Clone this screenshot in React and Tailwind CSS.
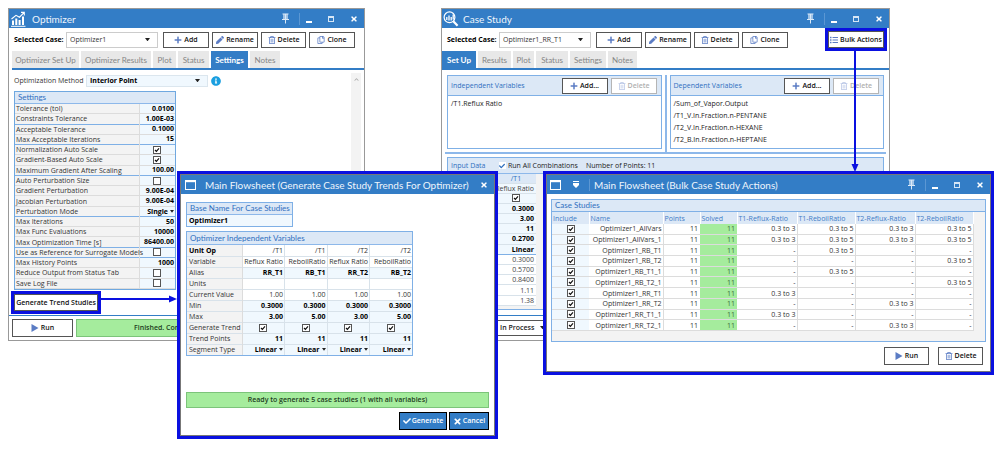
import React from "react";
import { FaPlus, FaPen, FaRegTrashAlt, FaRegCopy, FaList, FaInfoCircle, FaCheck, FaTimes, FaChevronUp } from "react-icons/fa";

function Caret({ className = "" }) {
  return (
    <svg viewBox="0 0 6 4" aria-hidden="true" className={`pointer-events-none ${className}`}>
      <path d="M0 0H6L3 4Z" fill="#222" />
    </svg>
  );
}

function PlayIcon({ className = "" }) {
  return (
    <svg viewBox="0 0 7 8" aria-hidden="true" className={className}>
      <path d="M0 0L7 4L0 8Z" fill="currentColor" />
    </svg>
  );
}

function PinIcon() {
  return (
    <svg viewBox="0 0 9 11" aria-hidden="true" className="h-[11px] w-[9px]" fill="none" stroke="#dbe9f7">
      <path d="M1.5 1H7.5M1 6.5H8" strokeWidth="1.2" />
      <path d="M3 1V6.5M6 1V6.5" strokeWidth="1.3" />
      <path d="M4.5 1V10.5" strokeWidth="1" />
    </svg>
  );
}

function Tick({ label, defaultChecked = false }) {
  return (
    <label className="inline-grid place-items-center align-middle">
      <input
        type="checkbox"
        aria-label={label}
        defaultChecked={defaultChecked}
        className="peer col-start-1 row-start-1 size-2 appearance-none border border-[#555] bg-white"
      />
      <svg viewBox="0 0 8 8" aria-hidden="true" className="pointer-events-none invisible col-start-1 row-start-1 size-2 peer-checked:visible">
        <path d="M2 4L3.4 5.4L6 2.4" fill="none" stroke="#111" strokeWidth="1.2" />
      </svg>
    </label>
  );
}

function Select({ label, value, className = "", selectClass = "", caret = "right-2 w-[5px]" }) {
  return (
    <span className={`relative flex items-center ${className}`}>
      <select aria-label={label} className={`w-full appearance-none outline-none ${selectClass}`} defaultValue={value}>
        <option>{value}</option>
      </select>
      <Caret className={`absolute ${caret}`} />
    </span>
  );
}

function Btn({ icon: Icon, children, className = "", disabled = false, tone = "text-[#5b7cc4]" }) {
  return (
    <button
      type="button"
      disabled={disabled}
      className={`flex items-center justify-center gap-[2px] border bg-white text-[7px] leading-[10px] font-semibold whitespace-nowrap ${
        disabled ? "border-[#b5b5b5] text-[#b0b0b0]" : "border-[#555] text-[#111]"
      } ${className}`}
    >
      {Icon && <Icon className={`size-2 shrink-0 ${disabled ? "text-[#b9c6e6]" : tone}`} />}
      {children}
    </button>
  );
}

function WindowButtons() {
  return (
    <div className="flex h-full items-center">
      <button type="button" aria-label="Pin" className="pr-[9px]"><PinIcon /></button>
      <span className="h-3 w-px bg-[#5b97d3]" />
      <button type="button" aria-label="Minimize" className="ml-[6px] h-2 w-[6px] border-b-2 border-white" />
      <button type="button" aria-label="Maximize" className="ml-4 h-[6px] w-[6px] border border-t-2 border-[#d6e6f6]" />
      <button type="button" aria-label="Close" className="ml-4 mr-[6px]"><FaTimes className="size-2" /></button>
    </div>
  );
}

function WindowIcon() {
  return (
    <svg viewBox="0 0 11 10" aria-hidden="true" className="h-[10px] w-[11px]">
      <rect x=".5" y=".5" width="10" height="9" fill="none" stroke="#fff" />
      <path d="M0 1.2H11" stroke="#fff" strokeWidth="2" />
    </svg>
  );
}

function ChartIcon() {
  return (
    <svg viewBox="0 0 16 16" aria-hidden="true" className="size-4" stroke="#fff" fill="none">
      <path d="M1 15.3H15.5" strokeWidth="1" />
      <path d="M3 14V9.5M6.3 14V7.5M9.6 14V9M13 14V5.5" strokeWidth="2" />
      <path d="M1.5 8L6 4.3L9.5 6.2L14 1.6M11 1.4H14.3V4.6" strokeWidth="1.1" />
    </svg>
  );
}

function StudyIcon() {
  return (
    <svg viewBox="0 0 16 16" aria-hidden="true" className="size-4" stroke="#fff" fill="none">
      <circle cx="6.5" cy="6.3" r="5.4" strokeWidth="1.2" />
      <path d="M10.3 10.3L14.6 14.8" strokeWidth="2.2" />
      <path d="M3.8 9V6M6 9.6V4.5M8.2 9.6V6M10.2 8.5V3.5" strokeWidth="1.3" />
    </svg>
  );
}

function TitleBar({ icon, title, children }) {
  return (
    <header className="flex h-[19px] shrink-0 items-center justify-between bg-[#337dc6] text-white">
      <div className="flex items-center">
        {icon}
        <h2 className="font-['Lato',sans-serif] text-[10px] leading-4 whitespace-nowrap text-[#eef5fc]">{title}</h2>
      </div>
      {children}
    </header>
  );
}

function CaseToolbar({ value, children }) {
  return (
    <div className="flex h-[23px] items-center justify-between px-[5px]">
      <div className="flex items-center gap-[3px]">
        <span className="w-[49px] font-bold whitespace-nowrap text-black">Selected Case:</span>
        <Select label="Selected Case" value={value} className="mr-[2px] w-[92px]" selectClass="h-4 border border-[#ccc] bg-white pl-[3px] text-[#333]" />
        <Btn icon={FaPlus} className="h-4 w-[46px]">Add</Btn>
        <Btn icon={FaPen} className="h-4 w-[46px]">Rename</Btn>
        <Btn icon={FaRegTrashAlt} className="h-4 w-[45px]">Delete</Btn>
        <Btn icon={FaRegCopy} className="h-4 w-[46px]">Clone</Btn>
      </div>
      {children}
    </div>
  );
}

function Tabs({ items, active }) {
  return (
    <div role="tablist" className="flex h-[19px] items-end gap-[2px] border-b-2 border-[#337dc6] bg-white">
      {items.map(([name, width]) => (
        <button
          key={name}
          type="button"
          role="tab"
          aria-selected={name === active}
          className={`h-[17px] font-['Lato',sans-serif] text-[8px] leading-[10px] whitespace-nowrap ${width} ${
            name === active ? "bg-[#337dc6] font-bold text-white" : "bg-[#e8e8e8] text-[#858585]"
          }`}
        >
          {name}
        </button>
      ))}
    </div>
  );
}

const settings = [
  ["Tolerance (tol)", "0.0100"],
  ["Constraints Tolerance", "1.00E-03", true],
  ["Acceptable Tolerance", "0.1000"],
  ["Max Acceptable Iterations", "15", true],
  ["Normalization Auto Scale", true],
  ["Gradient-Based Auto Scale", true],
  ["Maximum Gradient After Scaling", "100.00", true],
  ["Auto Perturbation Size", false],
  ["Gradient Perturbation", "9.00E-04"],
  ["Jacobian Perturbation", "9.00E-04"],
  ["Perturbation Mode", "Single", true],
  ["Max Iterations", "50"],
  ["Max Func Evaluations", "10000"],
  ["Max Optimization Time [s]", "86400.00", true],
  ["Use as Reference for Surrogate Models", false, true],
  ["Max History Points", "1000"],
  ["Reduce Output from Status Tab", false],
  ["Save Log File", false],
];

function CellSelect({ label, value }) {
  return (
    <Select
      label={label}
      value={value}
      selectClass="h-[9px] pr-[6px] leading-[9px] font-bold text-black [text-align-last:right]"
      caret="right-0 w-1"
    />
  );
}

function SettingsTable() {
  return (
    <section className="w-[162px] border border-[#6fa8e0]">
      <h3 className="h-[12px] border-b border-[#8db8ea] bg-[#dce8f6] pl-[3px] font-['Lato',sans-serif] text-[8px] leading-[11px] text-[#2f6fbf]">Settings</h3>
      <table className="h-[185px] w-full table-fixed border-collapse leading-[9px]">
        <tbody>
          {settings.map(([name, value, last]) => (
            <tr key={name} className={`border-b ${last ? "border-[#7fb0e6]" : "border-[#dcdcdc]"}`}>
              <th scope="row" className="w-[124px] border-r border-r-[#dcdcdc] bg-[#f3f3f3] py-0 pl-[1px] text-left font-normal whitespace-nowrap text-[#333]">{name}</th>
              <td className={`bg-[#f0f8fe] px-[1px] py-0 leading-[8px] font-bold text-black ${typeof value === "boolean" ? "text-center" : "text-right"}`}>
                {typeof value === "boolean" ? (
                  <Tick label={name} defaultChecked={value} />
                ) : value === "Single" ? (
                  <CellSelect label={name} value={value} />
                ) : (
                  value
                )}
              </td>
            </tr>
          ))}
        </tbody>
      </table>
    </section>
  );
}

function OptimizerWindow() {
  return (
    <section className="absolute top-2 left-2 flex h-[333px] w-[357px] flex-col border border-[#999] bg-white">
      <TitleBar title="Optimizer" icon={<span className="mr-[6px] ml-px"><ChartIcon /></span>}>
        <WindowButtons />
      </TitleBar>
      <CaseToolbar value="Optimizer1" />
      <div className="pl-[3px]">
        <Tabs
          active="Settings"
          items={[["Optimizer Set Up", "w-[67px]"], ["Optimizer Results", "w-[70px]"], ["Plot", "w-[23px]"], ["Status", "w-[31px]"], ["Settings", "w-[37px]"], ["Notes", "w-[30px]"]]}
        />
      </div>
      <div className="flex grow justify-between pl-[5px]">
        <div>
          <div className="flex h-[21px] items-center gap-[3px]">
            <span className="w-[69px] whitespace-nowrap text-[#333]">Optimization Method</span>
            <Select label="Optimization Method" value="Interior Point" className="w-[122px]" selectClass="h-3 border border-[#dbe6ee] bg-[#f0f8fe] pl-[3px] font-bold text-black" />
            <FaInfoCircle className="size-[10px] text-[#1a9fe0]" />
          </div>
          <SettingsTable />
          <Btn className="mt-1 h-[17px] w-[84px] outline-3 outline-[#0a10e0]">Generate Trend Studies</Btn>
        </div>
        <div className="mt-[3px] mr-[3px] flex w-[10px] justify-center bg-[#f3f3f3] pt-1">
          <FaChevronUp className="size-[5px] text-[#aaa]" />
        </div>
      </div>
      <footer className="flex h-[25px] items-center gap-[3px] border-t border-[#337dc6] px-[3px]">
        <Btn icon={PlayIcon} className="h-[18px] w-[61px] gap-1">Run</Btn>
        <output className="flex h-[18px] grow items-center border border-[#7cc47a] bg-[#a5ec9d] pl-[57px] font-semibold whitespace-nowrap text-[#1c3c1c]">
          Finished. Conv
        </output>
      </footer>
    </section>
  );
}

const trendRows = [
  ["Unit Op", ["/T1", "/T1", "/T2", "/T2"], "plain"],
  ["Variable", ["Reflux Ratio", "ReboilRatio", "Reflux Ratio", "ReboilRatio"], "plain"],
  ["Alias", ["RR_T1", "RB_T1", "RR_T2", "RB_T2"], "input"],
  ["Units", ["", "", "", ""], "plain"],
  ["Current Value", ["1.00", "1.00", "1.00", "1.00"], "plain"],
  ["Min", ["0.3000", "0.3000", "0.3000", "0.3000"], "input"],
  ["Max", ["3.00", "5.00", "3.00", "5.00"], "input"],
  ["Generate Trend", [true, true, true, true], "input"],
  ["Trend Points", ["11", "11", "11", "11"], "input"],
  ["Segment Type", ["Linear", "Linear", "Linear", "Linear"], "input"],
];

function GenerateDialog() {
  return (
    <section role="dialog" aria-label="Generate Case Study Trends" className="absolute top-[171px] left-[177px] w-[321px] border-3 border-[#0a10e0] bg-white">
      <div className="border border-[#777]">
        <TitleBar title="Main Flowsheet (Generate Case Study Trends For Optimizer)" icon={<span className="mr-[9px] ml-1"><WindowIcon /></span>}>
          <button type="button" aria-label="Close" className="mr-[6px]"><FaTimes className="size-2" /></button>
        </TitleBar>
        <div className="px-[5px] pt-2 pb-[5px]">
          <div className="w-[107px] border border-[#7fb0e6]">
            <label htmlFor="base" className="block h-[12px] border-b border-[#8db8ea] bg-[#dce8f6] pl-[3px] font-['Lato',sans-serif] text-[8px] leading-[11px] whitespace-nowrap text-[#2f6fbf]">Base Name For Case Studies</label>
            <input id="base" defaultValue="Optimizer1" className="block h-[11px] w-full bg-[#f0f8fe] pl-[2px] leading-[11px] font-bold text-black outline-none" />
          </div>
          <div className="mt-1 w-[227px] border border-[#7fb0e6]">
            <h3 className="h-[13px] border-b border-[#8db8ea] bg-[#dce8f6] pl-[3px] font-['Lato',sans-serif] text-[8px] leading-[12px] text-[#2f6fbf]">Optimizer Independent Variables</h3>
            <table className="w-full table-fixed border-collapse leading-[9px]">
              <tbody>
                {trendRows.map(([name, cells, kind], r) => (
                  <tr key={name} className="h-[11px] border-b border-[#d8e2ea] last:border-b-0">
                    <th scope="row" className={`w-[55px] border-r border-[#dcdcdc] bg-[#f3f3f3] py-0 pl-[2px] text-left whitespace-nowrap ${r === 0 ? "font-bold text-black" : "font-normal text-[#333]"}`}>{name}</th>
                    {cells.map((c, i) => (
                      <td key={i} className={`border-r border-[#d8e2ea] px-[1px] py-0 whitespace-nowrap last:border-r-0 ${c === true ? "text-center" : "text-right"} ${kind === "input" ? "bg-[#f0f8fe] font-bold text-black" : "text-[#333]"}`}>
                        {c === true ? <Tick label={`${name} ${i + 1}`} defaultChecked /> : c === "Linear" ? <CellSelect label={`${name} ${i + 1}`} value={c} /> : c}
                      </td>
                    ))}
                  </tr>
                ))}
              </tbody>
            </table>
          </div>
          <output className="mt-[36px] flex h-4 items-center justify-center border border-[#7cc47a] bg-[#a5ec9d] font-semibold text-[#1c3c1c]">
            Ready to generate 5 case studies (1 with all variables)
          </output>
          <div className="mt-1 flex justify-end gap-[2px] font-semibold text-white">
            <button type="button" className="flex h-[18px] w-12 items-center justify-center gap-px border border-black bg-[#337dc6]"><FaCheck className="size-2" />Generate</button>
            <button type="button" className="flex h-[18px] w-10 items-center justify-center gap-px border border-black bg-[#337dc6]"><FaTimes className="size-[9px]" />Cancel</button>
          </div>
        </div>
      </div>
    </section>
  );
}

function VariablePanel({ title, items }) {
  return (
    <section className="flex h-[74px] flex-1 flex-col border border-[#7fb0e6]">
      <header className="flex h-5 items-center gap-[3px] border-b border-[#7fb0e6] bg-[#dce8f6] pr-1 pl-[3px]">
        <h3 className="grow text-[#2f6fbf]">{title}</h3>
        <Btn icon={FaPlus} className="h-4 w-[46px]">Add...</Btn>
        <Btn icon={FaRegTrashAlt} disabled className="h-4 w-[46px]">Delete</Btn>
      </header>
      <ul className="pt-[2px] pl-[3px] leading-3 text-[#222]">
        {items.map((t) => <li key={t}>{t}</li>)}
      </ul>
    </section>
  );
}

const inputRows = [["0.3000", 1], ["3.00", 1], ["11", 1], ["0.2700", 1], ["Linear", 1], ["0.3000"], ["0.5700"], ["0.8400"], ["1.11"], ["1.38"]];

function CaseStudyWindow() {
  return (
    <section className="absolute top-2 left-[441px] flex h-[333px] w-[449px] flex-col border border-[#999] bg-white">
      <TitleBar title="Case Study" icon={<span className="mr-1 ml-px"><StudyIcon /></span>}>
        <WindowButtons />
      </TitleBar>
      <CaseToolbar value="Optimizer1_RR_T1">
        <Btn icon={FaList} className="h-[17px] w-[56px] outline-3 outline-[#0a10e0]">Bulk Actions</Btn>
      </CaseToolbar>
      <Tabs
        active="Set Up"
        items={[["Set Up", "w-[34px]"], ["Results", "w-[33px]"], ["Plot", "w-[21px]"], ["Status", "w-[32px]"], ["Settings", "w-[36px]"], ["Notes", "w-[29px]"]]}
      />
      <div className="flex grow flex-col px-[3px] pt-[5px]">
        <div className="flex gap-[3px] border-b-2 border-[#8db8ea] px-[2px]">
          <VariablePanel title="Independent Variables" items={["/T1.Reflux Ratio"]} />
          <div className="h-[77px] w-[2px] bg-[#8db8ea]" />
          <VariablePanel title="Dependent Variables" items={["/Sum_of_Vapor.Output", "/T1_V.In.Fraction.n-PENTANE", "/T2_V.In.Fraction.n-HEXANE", "/T2_B.In.Fraction.n-HEPTANE"]} />
        </div>
        <section className="mx-[2px] mt-[3px] mb-[5px] grow border border-[#7fb0e6] bg-[#f3f3f3]">
          <header className="flex h-4 items-center border-b border-[#8db8ea] bg-[#dce8f6] pl-[3px] text-[#222]">
            <h3 className="w-12 text-[#2f6fbf]">Input Data</h3>
            <label className="flex w-[87px] items-center gap-[2px] whitespace-nowrap">
              <input type="checkbox" defaultChecked className="peer sr-only" />
              <span className="invisible flex size-[7px] items-center bg-white peer-checked:visible"><FaCheck className="size-[6px] text-[#2f6fbf]" /></span>
              Run All Combinations
            </label>
            <span>Number of Points: 11</span>
          </header>
          <table className="h-[132px] w-[88px] border-collapse bg-[#f0f8fe] text-right leading-[9px]">
            <thead>
              <tr className="border-b border-[#d8e2ea] bg-[#dce8f6] text-center text-[#2f6fbf]"><th className="p-0 pl-12 font-normal">/T1</th></tr>
            </thead>
            <tbody>
              <tr className="border-b border-[#d8e2ea]"><td className="p-0 pr-[2px] text-[#444]">Reflux Ratio</td></tr>
              <tr className="border-b border-[#d8e2ea]"><td className="p-0 pl-12 text-center leading-[8px]"><Tick label="Reflux Ratio" defaultChecked /></td></tr>
              {inputRows.map(([v, strong], i) => (
                <tr key={i} className={`border-b ${v === "Linear" ? "border-[#7fb0e6]" : "border-[#d8e2ea]"}`}>
                  <td className={`p-0 pr-[2px] ${strong ? "font-bold text-black" : "bg-white text-[#444]"}`}>{v}</td>
                </tr>
              ))}
            </tbody>
          </table>
        </section>
      </div>
      <footer className="flex h-[25px] items-center border-t border-[#337dc6] px-1">
        <Select label="Status" value="In Process" className="w-[102px]" selectClass="h-4 border border-[#555] bg-white pl-[53px] font-semibold text-[#222]" caret="right-[3px] w-[5px]" />
      </footer>
    </section>
  );
}

const studies = [
  ["Optimizer1_AllVars", "0.3 to 3", "0.3 to 5", "0.3 to 3", "0.3 to 5"],
  ["Optimizer1_AllVars_1", "0.3 to 3", "0.3 to 5", "0.3 to 3", "0.3 to 5"],
  ["Optimizer1_RB_T1", "-", "0.3 to 5", "-", "-"],
  ["Optimizer1_RB_T2", "-", "-", "-", "0.3 to 5"],
  ["Optimizer1_RB_T1_1", "-", "0.3 to 5", "-", "-"],
  ["Optimizer1_RB_T2_1", "-", "-", "-", "0.3 to 5"],
  ["Optimizer1_RR_T1", "0.3 to 3", "-", "-", "-"],
  ["Optimizer1_RR_T2", "-", "-", "0.3 to 3", "-"],
  ["Optimizer1_RR_T1_1", "0.3 to 3", "-", "-", "-"],
  ["Optimizer1_RR_T2_1", "-", "-", "0.3 to 3", "-"],
];

const studyColumns = [
  ["Include", "w-[37px]"], ["Name", "w-[74px]"], ["Points", "w-[37px]"], ["Solved", "w-[37px]"],
  ["T1-Reflux-Ratio", "w-[60px]"], ["T1-ReboilRatio", "w-[58px]"], ["T2-Reflux-Ratio", "w-[60px]"], ["T2-ReboilRatio", "w-[58px]"],
];

function BulkWindow() {
  return (
    <section role="dialog" aria-label="Bulk Case Study Actions" className="absolute top-[171px] left-[543px] w-[451px] border-3 border-[#0a10e0] bg-white">
      <div className="border border-[#777]">
        <TitleBar
          title="Main Flowsheet (Bulk Case Study Actions)"
          icon={
            <span className="mr-2 ml-[3px] flex items-center">
              <WindowIcon />
              <svg viewBox="0 0 6 7" aria-hidden="true" className="mr-[10px] ml-3 h-[7px] w-[6px]" fill="#fff"><path d="M0 0H6V1H0ZM0 2H6V4L3 7L0 4Z" /></svg>
              <span className="-mr-1 h-3 w-px bg-[#5b97d3]" />
            </span>
          }
        >
          <WindowButtons />
        </TitleBar>
        <div className="px-[4px] pt-[5px] pb-[6px]">
          <section className="h-[143px] border border-[#7fb0e6] bg-[#f3f3f3]">
            <h3 className="h-[12px] border-b border-[#7fb0e6] bg-[#dce8f6] pl-[3px] font-['Lato',sans-serif] text-[8px] leading-[11px] text-[#2f6fbf]">Case Studies</h3>
            <table className="h-[119px] w-[421px] table-fixed border-collapse text-right leading-[9px]">
              <thead>
                <tr className="h-3 bg-[#dce8f6] text-left text-[#3f7cc6]">
                  {studyColumns.map(([c, w]) => <th key={c} className={`border-r border-white p-0 pl-[1px] font-normal whitespace-nowrap ${w}`}>{c}</th>)}
                </tr>
              </thead>
              <tbody>
                {studies.map(([name, ...ranges]) => (
                  <tr key={name} className="border-b border-[#dcdcdc] bg-white text-[#333]">
                    <td className="bg-[#f0f8fe] p-0 text-center leading-[8px]"><Tick label={`Include ${name}`} defaultChecked /></td>
                    <td className="border-r border-[#dcdcdc] p-0 pr-[1px] whitespace-nowrap">{name}</td>
                    <td className="p-0 pr-[2px]">11</td>
                    <td className="bg-[#a5ec9d] p-0 pr-[2px] text-[#3d6b3a]">11</td>
                    {ranges.map((v, i) => <td key={i} className="border-r border-[#dcdcdc] p-0 pr-[1px]">{v}</td>)}
                  </tr>
                ))}
              </tbody>
            </table>
          </section>
          <div className="mt-[5px] flex justify-end gap-[9px] pr-[3px]">
            <Btn icon={PlayIcon} className="h-[18px] w-[45px] gap-1">Run</Btn>
            <Btn icon={FaRegTrashAlt} className="h-[18px] w-[45px]">Delete</Btn>
          </div>
        </div>
      </div>
    </section>
  );
}

export default function App() {
  return (
    <main className="relative min-h-screen overflow-hidden bg-white font-['Open_Sans','Noto_Sans',sans-serif] text-[7px] leading-[10px]">
      <OptimizerWindow />
      <CaseStudyWindow />
      <GenerateDialog />
      <BulkWindow />
      <svg viewBox="0 0 80 8" aria-hidden="true" className="pointer-events-none absolute top-[295px] left-[99px] h-2 w-20">
        <path d="M0 4H74" stroke="#0a10e0" strokeWidth="2" />
        <path d="M70 0.5L78 4L70 7.5Z" fill="#0a10e0" />
      </svg>
      <svg viewBox="0 0 8 124" aria-hidden="true" className="pointer-events-none absolute top-12 left-[851px] h-[124px] w-2">
        <path d="M4 0V118" stroke="#0a10e0" strokeWidth="2" />
        <path d="M0.5 116H7.5L4 124Z" fill="#0a10e0" />
      </svg>
    </main>
  );
}
